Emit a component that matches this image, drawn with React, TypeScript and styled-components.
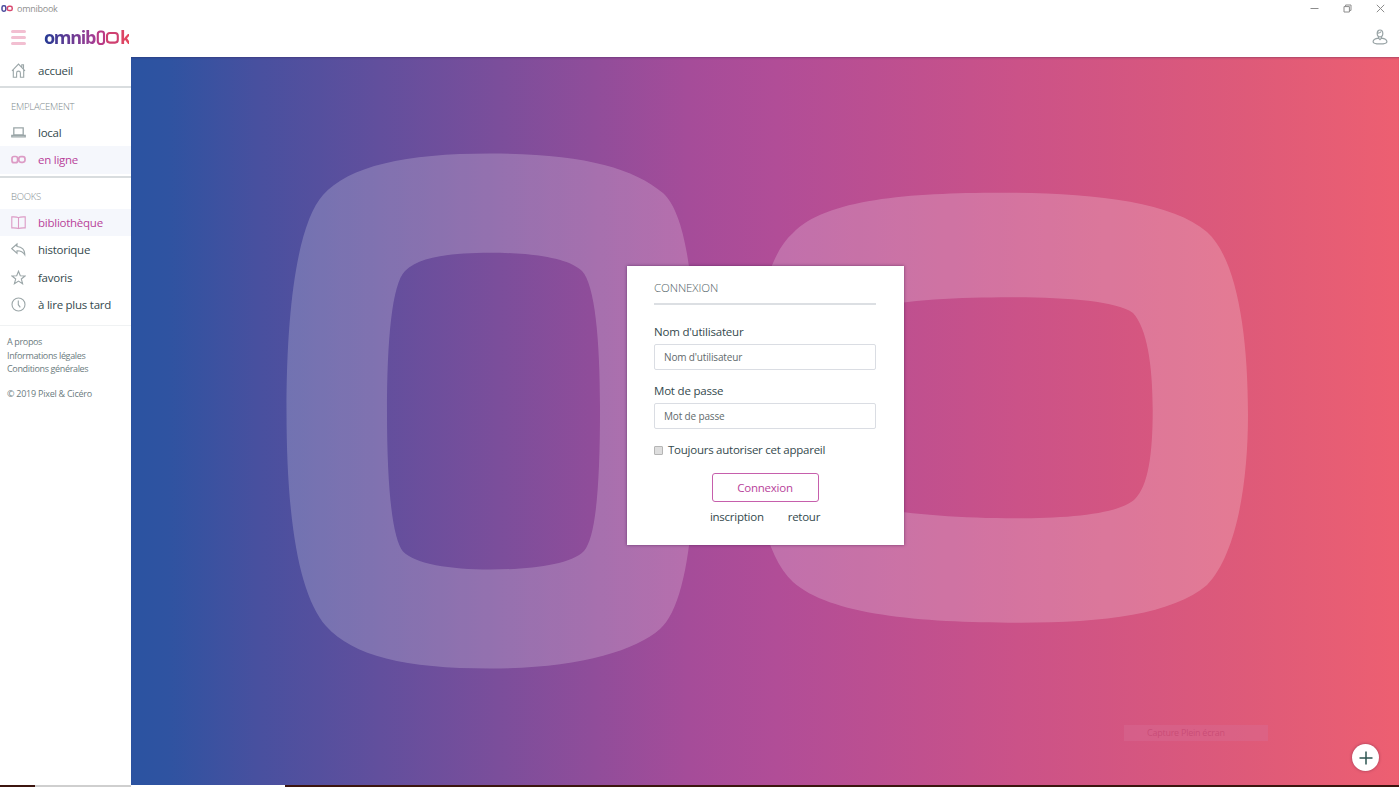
import React, { useState } from 'react';
import styled, { createGlobalStyle } from 'styled-components';

export default function App() {

  const [location, setLocation] = useState('en ligne');
  const [section, setSection] = useState('bibliothèque');
  const [remember, setRemember] = useState(false);

  return (
    <>
      <GlobalStyle />
      <Window>
        <TitleBar>
          <svg width="12" height="7" viewBox="0 0 12 7" fill="none" strokeWidth="1.5">
            <rect x="1" y="0.8" width="3.8" height="5.4" rx="1.7" stroke="#4a4a9c" />
            <rect x="6.4" y="1.2" width="4.8" height="4.4" rx="1.7" stroke="#d8486f" />
          </svg>
          <AppName>omnibook</AppName>
          <WindowButtons>
            <svg width="9" height="9" viewBox="0 0 9 9"><path d="M0.5 4.5h8" /></svg>
            <svg width="9" height="9" viewBox="0 0 9 9"><path d="M1 2.6h5.4v5.4H1zM2.6 2.6V1H8v5.4H6.4" /></svg>
            <svg width="9" height="9" viewBox="0 0 9 9"><path d="M0.8 0.8l7.4 7.4M8.2 0.8L0.8 8.2" /></svg>
          </WindowButtons>
        </TitleBar>
        <Header>
          <Burger type="button" aria-label="menu">
            <span />
            <span />
            <span />
          </Burger>
          <Logo>
            <LogoText $from="#233a94" $to="#a83c93" $width={52}>omnib</LogoText>
            <svg width="24" height="15" viewBox="0 0 24 15" fill="none" strokeWidth="2.1">
              <rect x="1.8" y="1.5" width="6.2" height="12.5" rx="2.4" stroke="#b93a85" />
              <rect x="11" y="3" width="10.8" height="9.6" rx="2.8" stroke="#cf4070" />
            </svg>
            <LogoText $from="#d84368" $to="#e5475c" $width={9}>k</LogoText>
          </Logo>
          <UserIcon width="16" height="16" viewBox="0 0 16 16">
            <ellipse cx="8" cy="4.4" rx="2.8" ry="3.4" />
            <path d="M6.5 7.4v1.7c-3 .4-5.400 1.500-5.400 3.600 0 1.400 2.900 2.200 6.900 2.200s6.900-.8 6.900-2.200c0-2.100-2.400-3.200-5.400-3.600V7.400M6.500 9.100L8 10.700l1.500-1.600" />
            <path d="M5.300 4c1.800.2 3.300-.4 4-1.500" />
          </UserIcon>
        </Header>
        <Body>
          <Sidebar>
            <Group $height={29}>
              <NavItem icon="home" label="accueil" />
            </Group>
            <Rule />
            <Group $height={88}>
              <Heading>EMPLACEMENT</Heading>
              <NavItem icon="laptop" label="local" active={location === 'local'} onClick={() => setLocation('local')} />
              <NavItem icon="loop" label="en ligne" active={location === 'en ligne'} onClick={() => setLocation('en ligne')} />
            </Group>
            <Rule />
            <Group $height={147}>
              <Heading>BOOKS</Heading>
              {sections.map((s) => (
                <NavItem key={s.label} icon={s.icon} label={s.label} active={section === s.label} onClick={() => setSection(s.label)} />
              ))}
            </Group>
            <Rule $light />
            <Legal>
              <a>A propos</a>
              <a>Informations légales</a>
              <a>Conditions générales</a>
              <p>© 2019 Pixel &amp; Cicéro</p>
            </Legal>
          </Sidebar>
          <Stage>
            <Artwork viewBox="131 57 1268 728" preserveAspectRatio="none">
              <path d="M490 153.5C580 153.5 632 167 663 193C686 214 697 285 694.5 405C697 525 686 606 660 629C634 652 575 668.5 490 668.5C405 668.5 353 656 326 626C299 595 286.500 520 286.500 411C286.500 300 299 222 323 195C349 166 405 153.500 490 153.500ZM490 252.700C450 252.700 419 257 405 271C392 284 387 340 387 412C387 485 392 538 403 551.500C415 564 450 569.500 490 569.500C530 569.500 570 565 584 551C596 537 600 485 600 408C600 340 595 285 582 271C569 258 532 252.700 490 252.700Z" />
              <path d="M1000 192.700C1090 192.700 1171 201 1207 232C1236 258 1248 330 1248 415C1248 485 1236 555 1207 585C1173 614 1105 622.700 1020 622.700C920 622.700 830 615 793 582C764 555 752 490 753 411C752 330 764 258 793 233C825 199 910 192.700 1000 192.700ZM1010 297.300C960 297.300 905 300 870 308C858 325 855 360 855 408C855 455 858 490 870 507C905 514 960 518.300 1016 518.300C1070 518.300 1119 514 1135 499C1148 486 1152.700 455 1152.700 410C1152.700 365 1147 328 1133 313C1117 301 1065 297.300 1010 297.300Z" />
            </Artwork>
            <Card>
              <CardTitle>CONNEXION</CardTitle>
              <Field>
                <label htmlFor="user">Nom d'utilisateur</label>
                <input id="user" type="text" placeholder="Nom d'utilisateur" />
              </Field>
              <Field>
                <label htmlFor="password">Mot de passe</label>
                <input id="password" type="password" placeholder="Mot de passe" />
              </Field>
              <Remember>
                <input type="checkbox" checked={remember} onChange={() => setRemember(!remember)} />
                <span>Toujours autoriser cet appareil</span>
              </Remember>
              <ButtonLogin type="button">Connexion</ButtonLogin>
              <CardLinks>
                <a>inscription</a>
                <a>retour</a>
              </CardLinks>
            </Card>
            <Capture>Capture Plein écran</Capture>
            <ButtonAdd type="button" aria-label="ajouter">
              <svg width="14" height="14" viewBox="0 0 14 14"><path d="M7 0.5v13M0.5 7h13" stroke="#2d5552" strokeWidth="1.5" /></svg>
            </ButtonAdd>
          </Stage>
        </Body>
        <Taskbar>
          <span />
          <span />
          <span />
        </Taskbar>
      </Window>
    </>
  );
};

const sections = [
  { icon: 'book', label: 'bibliothèque' },
  { icon: 'reply', label: 'historique' },
  { icon: 'star', label: 'favoris' },
  { icon: 'clock', label: 'à lire plus tard' },
];

const icons: any = {
  home: <path d="M1 7.800L7.500 1l6.500 6.800M2.300 6.700v7.500h3.300V10a1.900 1.900 0 0 1 3.800 0v4.200h3.300V6.700M10.800 4V1.800h1.700v4" />,
  laptop: <path d="M2.800 2.800h9.400v7H2.800zM.8 10.300h13.400v1.600H.8z" strokeWidth="1.300" />,
  loop: (
    <>
      <rect x="1" y="4.500" width="5.600" height="6.200" rx="2" strokeWidth="1.700" />
      <rect x="7.800" y="4.700" width="6.200" height="5.600" rx="2.200" strokeWidth="1.700" />
    </>
  ),
  book: <path d="M7.500 2.600C6 1.700 3.600 1.800.8 1.900v11c2.800-.1 5.200-.1 6.700.7 1.500-.8 3.900-.8 6.700-.7v-11c-2.800-.1-5.200-.2-6.700.7zv11" />,
  reply: <path d="M6 2L.8 6.600 6 11.200V8.700c4.200-.1 6 1 7.800 4.100C14 8 11 4.700 6 4.500z" />,
  star: <path d="M7.500 1.200l1.800 4.500 4.700.3-3.700 3 1.300 4.700-4.100-2.600-4.100 2.600L4.700 9 1 6l4.700-.3z" />,
  clock: (
    <>
      <circle cx="7.500" cy="7.500" r="6.500" />
      <path d="M7.300 3.400v4.300l2 2.600" />
    </>
  ),
};

function NavItem({ icon, label, active = false, onClick = () => { } }: any) {
  return (
    <NavRow $active={active} onClick={onClick}>
      <svg width="15" height="15" viewBox="0 0 15 15">{icons[icon]}</svg>
      <span>{label}</span>
    </NavRow>
  );
}

const GlobalStyle = createGlobalStyle`
  * {
    box-sizing: border-box;
  }

  body {
    margin: 0;
    overflow: hidden;
    background: #fff;
    color: #34494d;
    font-family: "Open Sans", "Noto Sans", sans-serif;
    font-size: 11.5px;
    letter-spacing: -0.25px;
  }

  button, input {
    font: inherit;
    letter-spacing: inherit;
  }
`;

const Window = styled.div`
  display: flex;
  flex-direction: column;
  width: 100%;
  height: 100vh;
`;

const TitleBar = styled.div`
  display: flex;
  align-items: center;
  height: 17px;
  padding: 0 14px 0 1px;
`;

const AppName = styled.span`
  margin-left: 4px;
  color: #8f8f8f;
  font-size: 9px;
`;

const WindowButtons = styled.div`
  display: flex;
  gap: 24px;
  margin: -1px 0 0 auto;

  svg {
    fill: none;
    stroke: #8c8c8c;
    stroke-width: 1;
  }
`;

const Header = styled.header`
  display: flex;
  align-items: center;
  height: 40px;
  padding: 0 11px;
`;

const Burger = styled.button`
  display: flex;
  flex-direction: column;
  gap: 3px;
  width: 15px;
  padding: 0;
  border: 0;
  background: none;

  span {
    height: 3px;
    border-radius: 2px;
    background: #f2bfd1;
  }
`;

const Logo = styled.div`
  display: flex;
  align-items: center;
  height: 24px;
  margin-left: 18px;
`;

const LogoText = styled.span<{ $from: string; $to: string; $width: number }>`
  width: ${(p) => p.$width}px;
  background: linear-gradient(90deg, ${(p) => p.$from}, ${(p) => p.$to});
  background-clip: text;
  color: transparent;
  font-size: 18px;
  font-weight: 700;
  line-height: 24px;
  letter-spacing: -1.3px;
  white-space: nowrap;
`;

const UserIcon = styled.svg`
  margin-left: auto;
  fill: none;
  stroke: #98a3a5;
  stroke-width: 1.2;
`;

const Body = styled.div`
  display: flex;
  flex: 1;
  min-height: 0;
`;

const Sidebar = styled.nav`
  width: 131px;
  background: #fff;
`;

const Group = styled.div<{ $height: number }>`
  height: ${(p) => p.$height}px;
`;

const Rule = styled.div<{ $light?: boolean }>`
  height: ${(p) => (p.$light ? 1 : 2)}px;
  background: ${(p) => (p.$light ? '#f0f2f3' : '#d9dddf')};
`;

const Heading = styled.h2`
  height: 31px;
  margin: 0;
  padding: 10px 0 0 11px;
  color: #7f8b8e;
  font-size: 9.5px;
  font-weight: 300;
  line-height: 17px;
`;

const NavRow = styled.div<{ $active: boolean }>`
  display: flex;
  align-items: center;
  height: 27.3px;
  padding-left: 11px;
  background: ${(p) => (p.$active ? '#f5f7fc' : 'transparent')};
  color: ${(p) => (p.$active ? '#b8429a' : '#34494d')};
  white-space: nowrap;
  cursor: pointer;

  svg {
    margin-right: 12px;
    fill: none;
    stroke: ${(p) => (p.$active ? '#dc9bc5' : '#9ba6a8')};
    stroke-width: 1.1;
  }
`;

const Legal = styled.footer`
  display: flex;
  flex-direction: column;
  padding: 9px 0 0 7px;
  color: #6b7b80;
  font-size: 9px;
  line-height: 13.5px;
  letter-spacing: -0.35px;
  white-space: nowrap;

  p {
    margin: 11px 0 0;
    letter-spacing: -0.25px;
  }
`;

const Stage = styled.main`
  position: relative;
  display: flex;
  flex: 1;
  align-items: flex-start;
  justify-content: center;
  padding: 209px 0 0 1px;
  background: linear-gradient(90deg, #2b53a1 0%, #2f53a1 3%, #48509f 10%, #7b4e9b 29%, #a54c99 44%, #b14d97 51%, #cb5288 70%, #de5a79 88%, #ed5f71 100%);
  box-shadow: inset 0 2px 2px -1px rgba(40, 20, 70, 0.3);
`;

const Artwork = styled.svg`
  position: absolute;
  inset: 0;
  width: 100%;
  height: 100%;
  fill: rgba(255, 255, 255, 0.2);
  fill-rule: evenodd;
`;

const Card = styled.form`
  position: relative;
  display: flex;
  flex-direction: column;
  width: 277px;
  height: 279px;
  padding: 12px 28px 0 27px;
  background: #fff;
  box-shadow: 0 0 3px rgba(60, 20, 70, 0.6);
`;

const CardTitle = styled.h1`
  height: 27px;
  margin: 0 0 18px;
  border-bottom: 2px solid #dcdfe3;
  color: #4f6165;
  font-size: 11.5px;
  font-weight: 300;
  line-height: 19px;
  letter-spacing: -0.1px;
`;

const Field = styled.div`
  display: flex;
  flex-direction: column;
  height: 59px;

  label {
    height: 21px;
    line-height: 18px;
    letter-spacing: -0.2px;
  }

  input {
    height: 26px;
    padding: 0 9px;
    border: 1px solid #dadde3;
    border-radius: 2px;
    outline: none;
    color: #34494d;
    font-size: 10px;
    letter-spacing: -0.15px;
  }

  input::placeholder {
    color: #5f6a6c;
  }
`;

const Remember = styled.label`
  display: flex;
  align-items: center;
  height: 18px;
  white-space: nowrap;

  input {
    width: 9px;
    height: 9px;
    margin: 1px 5px 0 0;
    border: 1px solid #b5b5b5;
    border-radius: 1px;
    appearance: none;
    background: #dedede;
  }

  input:checked {
    background: #b8429a;
  }

  span {
    margin-top: -2px;
  }
`;

const ButtonLogin = styled.button`
  align-self: center;
  width: 107px;
  height: 29px;
  margin-top: 14px;
  padding: 0;
  border: 1px solid #c65fac;
  border-radius: 3px;
  background: #fff;
  color: #b8429a;
`;

const CardLinks = styled.div`
  display: flex;
  gap: 24px;
  justify-content: center;
  margin-top: 6px;
  line-height: 18px;
`;

const Capture = styled.div`
  position: absolute;
  right: 131px;
  bottom: 44px;
  width: 144px;
  height: 16px;
  padding-left: 23px;
  background: rgba(215, 110, 150, 0.4);
  color: rgba(190, 60, 105, 0.55);
  font-size: 9px;
  line-height: 16px;
`;

const ButtonAdd = styled.button`
  position: absolute;
  right: 20px;
  bottom: 14px;
  display: flex;
  align-items: center;
  justify-content: center;
  width: 27px;
  height: 27px;
  padding: 0;
  border: 0;
  border-radius: 50%;
  background: #fff;
  box-shadow: 0 0 3px rgba(80, 20, 50, 0.5);
`;

const Taskbar = styled.div`
  display: flex;
  height: 2px;
  background: #3c150f;

  span {
    width: 35px;
  }

  span + span {
    width: 96px;
    background: #cfcfcf;
  }

  span + span + span {
    width: 154px;
    background: #fff;
  }
`;
